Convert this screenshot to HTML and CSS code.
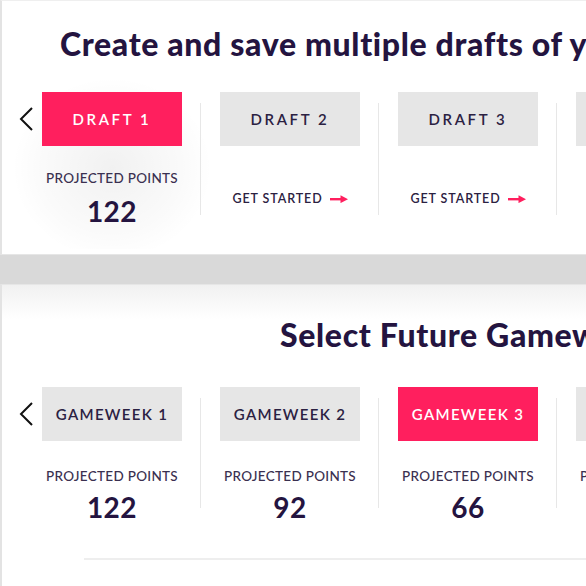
FILE: index.html
```html
<!DOCTYPE html>
<html lang="en">
<head>
<meta charset="utf-8">
<title>Drafts</title>
<link rel="stylesheet" href="styles.css">
</head>
<body>
<div class="page">
  <section class="card card-drafts">
    <h2 class="title title-drafts">Create and save multiple drafts of your team</h2>
    <div class="picker">
      <svg class="prev" viewBox="0 0 14 24" width="14" height="24" aria-hidden="true"><polyline points="13,1 2,12 13,23" fill="none" stroke="#111" stroke-width="2"/></svg>
      <div class="options">
        <div class="option glow">
          <div class="tab tab-draft active">DRAFT 1</div>
          <div class="label">PROJECTED POINTS</div>
          <div class="value">122</div>
        </div>
        <div class="divider"></div>
        <div class="option">
          <div class="tab tab-draft">DRAFT 2</div>
          <div class="cta">GET STARTED<svg class="arrow" viewBox="0 0 18 8" width="18" height="8" aria-hidden="true"><rect x="0" y="3" width="12" height="2.4" fill="#ff1f5e"/><polygon points="10.5,0.3 18,4.2 10.5,8.1" fill="#ff1f5e"/></svg></div>
        </div>
        <div class="divider"></div>
        <div class="option">
          <div class="tab tab-draft">DRAFT 3</div>
          <div class="cta">GET STARTED<svg class="arrow" viewBox="0 0 18 8" width="18" height="8" aria-hidden="true"><rect x="0" y="3" width="12" height="2.4" fill="#ff1f5e"/><polygon points="10.5,0.3 18,4.2 10.5,8.1" fill="#ff1f5e"/></svg></div>
        </div>
        <div class="divider"></div>
        <div class="option">
          <div class="tab tab-draft">DRAFT 4</div>
          <div class="cta">GET STARTED<svg class="arrow" viewBox="0 0 18 8" width="18" height="8" aria-hidden="true"><rect x="0" y="3" width="12" height="2.4" fill="#ff1f5e"/><polygon points="10.5,0.3 18,4.2 10.5,8.1" fill="#ff1f5e"/></svg></div>
        </div>
      </div>
    </div>
  </section>
  <div class="band"></div>
  <section class="card card-gw">
    <h2 class="title title-gw">Select Future Gameweeks</h2>
    <div class="picker">
      <svg class="prev" viewBox="0 0 14 24" width="14" height="24" aria-hidden="true"><polyline points="13,1 2,12 13,23" fill="none" stroke="#111" stroke-width="2"/></svg>
      <div class="options">
        <div class="option">
          <div class="tab tab-gw">GAMEWEEK 1</div>
          <div class="label">PROJECTED POINTS</div>
          <div class="value">122</div>
        </div>
        <div class="divider"></div>
        <div class="option">
          <div class="tab tab-gw">GAMEWEEK 2</div>
          <div class="label">PROJECTED POINTS</div>
          <div class="value">92</div>
        </div>
        <div class="divider"></div>
        <div class="option">
          <div class="tab tab-gw active">GAMEWEEK 3</div>
          <div class="label">PROJECTED POINTS</div>
          <div class="value">66</div>
        </div>
        <div class="divider"></div>
        <div class="option">
          <div class="tab tab-gw">GAMEWEEK 4</div>
          <div class="label">PROJECTED POINTS</div>
          <div class="value">58</div>
        </div>
      </div>
    </div>
    <div class="rule"></div>
  </section>
</div>
</body>
</html>
```
FILE: styles.css
```css
* { box-sizing: border-box; }
html, body { margin: 0; padding: 0; }
body {
  width: 586px;
  height: 586px;
  overflow: hidden;
  background: #d9d9d9;
  font-family: "Lato", "Open Sans", sans-serif;
  color: #241440;
}
.page {
  display: flex;
  flex-direction: column;
  width: 586px;
  height: 586px;
}
.card {
  background: #fff;
  border-left: 2px solid #e3e3e3;
  overflow: hidden;
}
.card-drafts {
  flex: 0 0 255px;
  border-top: 1px solid #efefef;
  border-bottom: 1px solid #e6e6e6;
  padding-top: 24px;
}
.band {
  flex: 0 0 29px;
  background: #d9d9d9;
}
.card-gw {
  flex: 1 1 auto;
  border-top: 1px solid #e6e6e6;
  background: linear-gradient(#f1f1f1, #ffffff 34px);
  padding-top: 31px;
}
.title {
  margin: 0;
  font-size: 32px;
  line-height: 38px;
  font-weight: 900;
  letter-spacing: 0.65px;
  white-space: nowrap;
  color: #241440;
}
.title-drafts { padding-left: 58px; }
.title-gw { padding-left: 278px; }
.picker {
  display: flex;
  align-items: flex-start;
  padding-left: 17px;
  margin-top: 29px;
}
.card-gw .picker { margin-top: 33px; }
.prev {
  flex: 0 0 14px;
  margin-top: 15px;
  margin-right: 9px;
}
.options {
  display: flex;
  align-items: flex-start;
}
.option {
  flex: 0 0 140px;
  display: flex;
  flex-direction: column;
  align-items: center;
}
.glow {
  flex: 0 0 200px;
  padding: 26px 30px 22px;
  margin: -26px -30px -22px;
  background: radial-gradient(ellipse 50% 50% at 50% 56%, rgba(0, 0, 0, 0.055), rgba(0, 0, 0, 0.02) 70%, rgba(0, 0, 0, 0) 100%);
}
.divider {
  flex: 0 0 1px;
  height: 112px;
  margin: 11px 19px 0 18px;
  background: #e7e7e7;
}
.card-gw .divider { height: 110px; }
.tab {
  width: 140px;
  height: 54px;
  line-height: 54px;
  text-align: center;
  background: #e6e6e6;
  color: #2b2142;
  font-size: 15px;
  font-weight: 600;
  white-space: nowrap;
}
.tab-draft { letter-spacing: 2.6px; }
.tab-gw { letter-spacing: 1.3px; }
.tab.active {
  background: #ff1f5e;
  color: #fff;
}
.label {
  margin-top: 24px;
  font-size: 13.5px;
  line-height: 16px;
  font-weight: 500;
  letter-spacing: 0.3px;
  color: #3a3050;
  white-space: nowrap;
}
.card-gw .label { margin-top: 27px; }
.value {
  margin-top: 9px;
  font-size: 28px;
  line-height: 32px;
  font-weight: 700;
  letter-spacing: 0.5px;
  color: #241440;
}
.card-gw .value { margin-top: 7px; }
.cta {
  margin-top: 45px;
  display: flex;
  align-items: center;
  font-size: 12.5px;
  line-height: 16px;
  font-weight: 600;
  letter-spacing: 0.9px;
  color: #2b2142;
  white-space: nowrap;
}
.arrow {
  margin-left: 7px;
}
.rule {
  margin-top: 35px;
  margin-left: 82px;
  height: 2px;
  background: #eeeeee;
}
```
